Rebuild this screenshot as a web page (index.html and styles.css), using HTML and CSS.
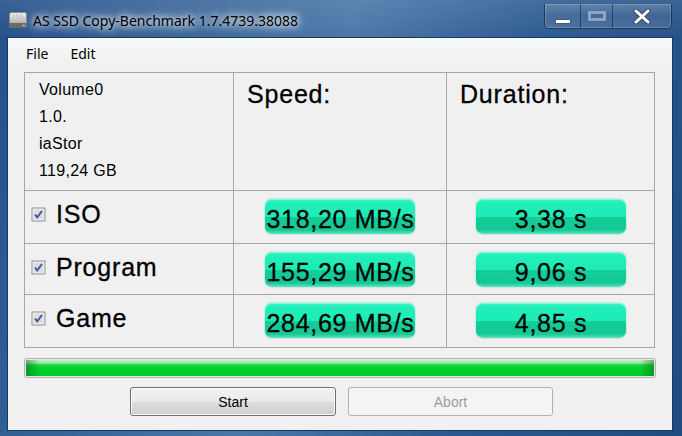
FILE: index.html
```html
<!DOCTYPE html>
<html>
<head>
  <title>AS SSD Copy-Benchmark</title>
  <link rel="stylesheet" href="styles.css">
</head>
<body>
  <div class="window">
    <div class="titlebar">
      <svg class="app-icon" width="20" height="18" viewBox="0 0 20 18">
        <defs>
          <linearGradient id="driveGrad" x1="0" y1="0" x2="0" y2="1">
            <stop offset="0" stop-color="#f2f2f2"/>
            <stop offset="1" stop-color="#a8a8a8"/>
          </linearGradient>
        </defs>
        <rect x="1.5" y="1.5" width="17" height="12" rx="2" fill="url(#driveGrad)" stroke="#8c8c8c"/>
        <path d="M6 3v7M8.5 3v7M11 3v7M13.5 3v7" stroke="#c4c4c4" stroke-width="1"/>
        <rect x="1" y="12" width="18" height="5" rx="1" fill="#6a6a6a"/>
        <rect x="14" y="14" width="3" height="1" fill="#9ad6ff"/>
      </svg>
      <span class="title">AS SSD Copy-Benchmark 1.7.4739.38088</span>
      <div class="controls">
        <div class="ctl ctl-min">
          <svg width="16" height="5" viewBox="0 0 16 5"><rect x="0.5" y="0.5" width="15" height="4" fill="#fff" stroke="#4a5a70"/></svg>
        </div>
        <div class="ctl ctl-max">
          <svg width="18" height="10" viewBox="0 0 18 10"><rect x="1.5" y="1.5" width="15" height="7" fill="none" stroke="#8ea3bf" stroke-width="3"/></svg>
        </div>
        <div class="ctl ctl-close">
          <svg width="18" height="15" viewBox="0 0 18 15">
            <path d="M3 2l12 11M15 2L3 13" stroke="#3b4b60" stroke-width="5" stroke-linecap="round"/>
            <path d="M3 2l12 11M15 2L3 13" stroke="#fff" stroke-width="3" stroke-linecap="round"/>
          </svg>
        </div>
      </div>
    </div>

    <div class="client">
      <div class="menubar">
        <span>File</span>
        <span>Edit</span>
      </div>

      <div class="panel">
        <div class="cell info">
          <div>Volume0</div>
          <div>1.0.</div>
          <div>iaStor</div>
          <div>119,24 GB</div>
        </div>
        <div class="cell head">Speed:</div>
        <div class="cell head">Duration:</div>

        <div class="cell test">
          <span class="check"><svg width="15" height="15" viewBox="0 0 15 15"><rect x="0.5" y="0.5" width="14" height="14" fill="#8f8f8f"/><rect x="1.5" y="1.5" width="12" height="12" fill="#f4f4f4"/><rect x="2.5" y="2.5" width="10" height="10" fill="#dcdcdc"/><path d="M4 7.5l2.2 2.8L11 4" fill="none" stroke="#3f5aa3" stroke-width="2"/></svg></span>
          <span class="name">ISO</span>
        </div>
        <div class="cell result"><div class="value">318,20 MB/s</div></div>
        <div class="cell result"><div class="value">3,38 s</div></div>

        <div class="cell test">
          <span class="check"><svg width="15" height="15" viewBox="0 0 15 15"><rect x="0.5" y="0.5" width="14" height="14" fill="#8f8f8f"/><rect x="1.5" y="1.5" width="12" height="12" fill="#f4f4f4"/><rect x="2.5" y="2.5" width="10" height="10" fill="#dcdcdc"/><path d="M4 7.5l2.2 2.8L11 4" fill="none" stroke="#3f5aa3" stroke-width="2"/></svg></span>
          <span class="name">Program</span>
        </div>
        <div class="cell result"><div class="value">155,29 MB/s</div></div>
        <div class="cell result"><div class="value">9,06 s</div></div>

        <div class="cell test">
          <span class="check"><svg width="15" height="15" viewBox="0 0 15 15"><rect x="0.5" y="0.5" width="14" height="14" fill="#8f8f8f"/><rect x="1.5" y="1.5" width="12" height="12" fill="#f4f4f4"/><rect x="2.5" y="2.5" width="10" height="10" fill="#dcdcdc"/><path d="M4 7.5l2.2 2.8L11 4" fill="none" stroke="#3f5aa3" stroke-width="2"/></svg></span>
          <span class="name">Game</span>
        </div>
        <div class="cell result"><div class="value">284,69 MB/s</div></div>
        <div class="cell result"><div class="value">4,85 s</div></div>
      </div>

      <div class="progress"><div class="progress-fill"></div></div>

      <div class="buttons">
        <button type="button" class="btn">Start</button>
        <button type="button" class="btn" disabled>Abort</button>
      </div>
    </div>
  </div>
</body>
</html>
```
FILE: styles.css
```css
html, body {
  margin: 0;
  padding: 0;
  overflow: hidden;
}
body {
  background: #1f4c7e;
}
.window {
  width: 682px;
  height: 436px;
  background:
    linear-gradient(180deg, rgba(255,255,255,0.10) 0px, rgba(255,255,255,0) 40px),
    linear-gradient(105deg, #24508a 0%, #3a679a 25%, #4a77a8 45%, #2c5a90 70%, #1f4b80 100%);
  display: flex;
  flex-direction: column;
}
.titlebar {
  height: 38px;
  display: flex;
  align-items: flex-start;
  flex-shrink: 0;
}
.app-icon {
  margin: 11px 0 0 8px;
}
.title {
  margin: 11px 0 0 5px;
  font-family: "Segoe UI", "Noto Sans", sans-serif;
  font-size: 14px;
  line-height: 20px;
  color: #000;
  text-shadow: 0 0 6px #fff, 0 0 10px rgba(255,255,255,0.9), 0 0 16px rgba(255,255,255,0.6);
}
.controls {
  margin: 4px 10px 0 auto;
  height: 24px;
  display: flex;
  border: 1px solid rgba(20,35,60,0.75);
  border-top: none;
  border-radius: 0 0 5px 5px;
  box-shadow: inset 0 0 0 1px rgba(255,255,255,0.18);
  background: linear-gradient(180deg, rgba(255,255,255,0.18), rgba(255,255,255,0.06) 50%, rgba(255,255,255,0.12));
  overflow: hidden;
}
.ctl {
  display: flex;
  align-items: center;
  justify-content: center;
  border-left: 1px solid rgba(20,35,60,0.6);
}
.ctl:first-child {
  border-left: none;
}
.ctl-min {
  width: 35px;
  align-items: flex-end;
  padding-bottom: 4px;
  box-sizing: border-box;
}
.ctl-max {
  width: 32px;
  align-items: flex-start;
  padding-top: 7px;
  box-sizing: border-box;
}
.ctl-close {
  width: 59px;
  align-items: flex-start;
  padding-top: 5px;
  box-sizing: border-box;
}

.client {
  margin: 0 10px 0 8px;
  height: 392px;
  background: #f0f0f0;
  outline: 1px solid #173a63;
  display: flex;
  flex-direction: column;
  align-items: flex-start;
}
.menubar {
  box-sizing: border-box;
  width: 100%;
  height: 27px;
  padding: 4px 0 0 18px;
  display: flex;
  gap: 22px;
  font-family: "Segoe UI", "Noto Sans", sans-serif;
  font-size: 14px;
  line-height: 23px;
  color: #000;
  background: linear-gradient(180deg, #f7f8fa, #f0f0f0);
}

.panel {
  margin: 7px 0 0 16px;
  display: grid;
  grid-template-columns: 208px 212px 207px;
  grid-template-rows: 117px 52px 50px 52px;
  gap: 1px;
  padding: 1px;
  background: #a7a7a7;
  font-family: "Liberation Sans", Arial, sans-serif;
  color: #000;
}
.cell {
  background: #f0f0f0;
  box-sizing: border-box;
}
.info {
  padding: 3px 0 0 14px;
  font-size: 16px;
  line-height: 27px;
  letter-spacing: 0.3px;
}
.head {
  padding: 7px 0 0 13px;
  font-size: 25px;
  line-height: 28px;
  letter-spacing: 0.8px;
  -webkit-text-stroke: 0.3px #000;
}
.test {
  display: flex;
  height: 100%;
  padding: 9px 0 0 6px;
  align-items: flex-start;
}
.check {
  display: flex;
  height: 28px;
  align-items: center;
}
.name {
  margin-left: 10px;
  font-size: 25px;
  line-height: 28px;
  letter-spacing: 0.8px;
  -webkit-text-stroke: 0.3px #000;
}
.result {
  display: flex;
  justify-content: center;
  align-items: flex-start;
  padding-top: 8px;
}
.value {
  box-sizing: border-box;
  width: 150px;
  height: 35px;
  padding: 5px 0 0 1px;
  border-radius: 7px;
  font-size: 25px;
  line-height: 30px;
  letter-spacing: 0.7px;
  -webkit-text-stroke: 0.3px #000;
  white-space: nowrap;
  display: flex;
  justify-content: center;
  background: linear-gradient(180deg, #3cf3c6 0%, #20efb9 12%, #1eecb6 50%, #13cd99 53%, #12c894 88%, #5fe2bf 100%);
  box-shadow: 0 0 2px rgba(60,220,175,0.7), inset 0 1px 0 rgba(160,255,230,0.7);
}

.progress {
  margin: 10px 0 0 16px;
  width: 632px;
  height: 20px;
  box-sizing: border-box;
  border: 1px solid #b4b4b4;
  border-radius: 3px;
  padding: 1px;
  background: #e6e6e6;
}
.progress-fill {
  height: 100%;
  border-radius: 1px;
  background:
    linear-gradient(90deg, rgba(0,90,20,0.45) 0px, rgba(0,90,20,0) 14px, rgba(0,90,20,0) calc(100% - 14px), rgba(0,90,20,0.45) 100%),
    linear-gradient(180deg, #c2f5c4 0%, #8de99a 20%, #18d43b 32%, #00d12a 60%, #00c927 100%);
}

.buttons {
  margin: 9px 0 0 122px;
  display: flex;
  gap: 12px;
}
.btn {
  width: 206px;
  height: 29px;
  box-sizing: border-box;
  border: 1px solid #707070;
  border-radius: 3px;
  font-family: "Liberation Sans", Arial, sans-serif;
  font-size: 14px;
  color: #000;
  padding: 0;
  background: linear-gradient(180deg, #f2f2f2 0%, #ebebeb 48%, #dddddd 52%, #cfcfcf 100%);
  box-shadow: inset 0 0 0 1px #fcfcfc;
}
.btn[disabled] {
  width: 205px;
  border-color: #adb2b5;
  color: #9d9d9d;
  background: #f4f4f4;
  box-shadow: none;
}
```
